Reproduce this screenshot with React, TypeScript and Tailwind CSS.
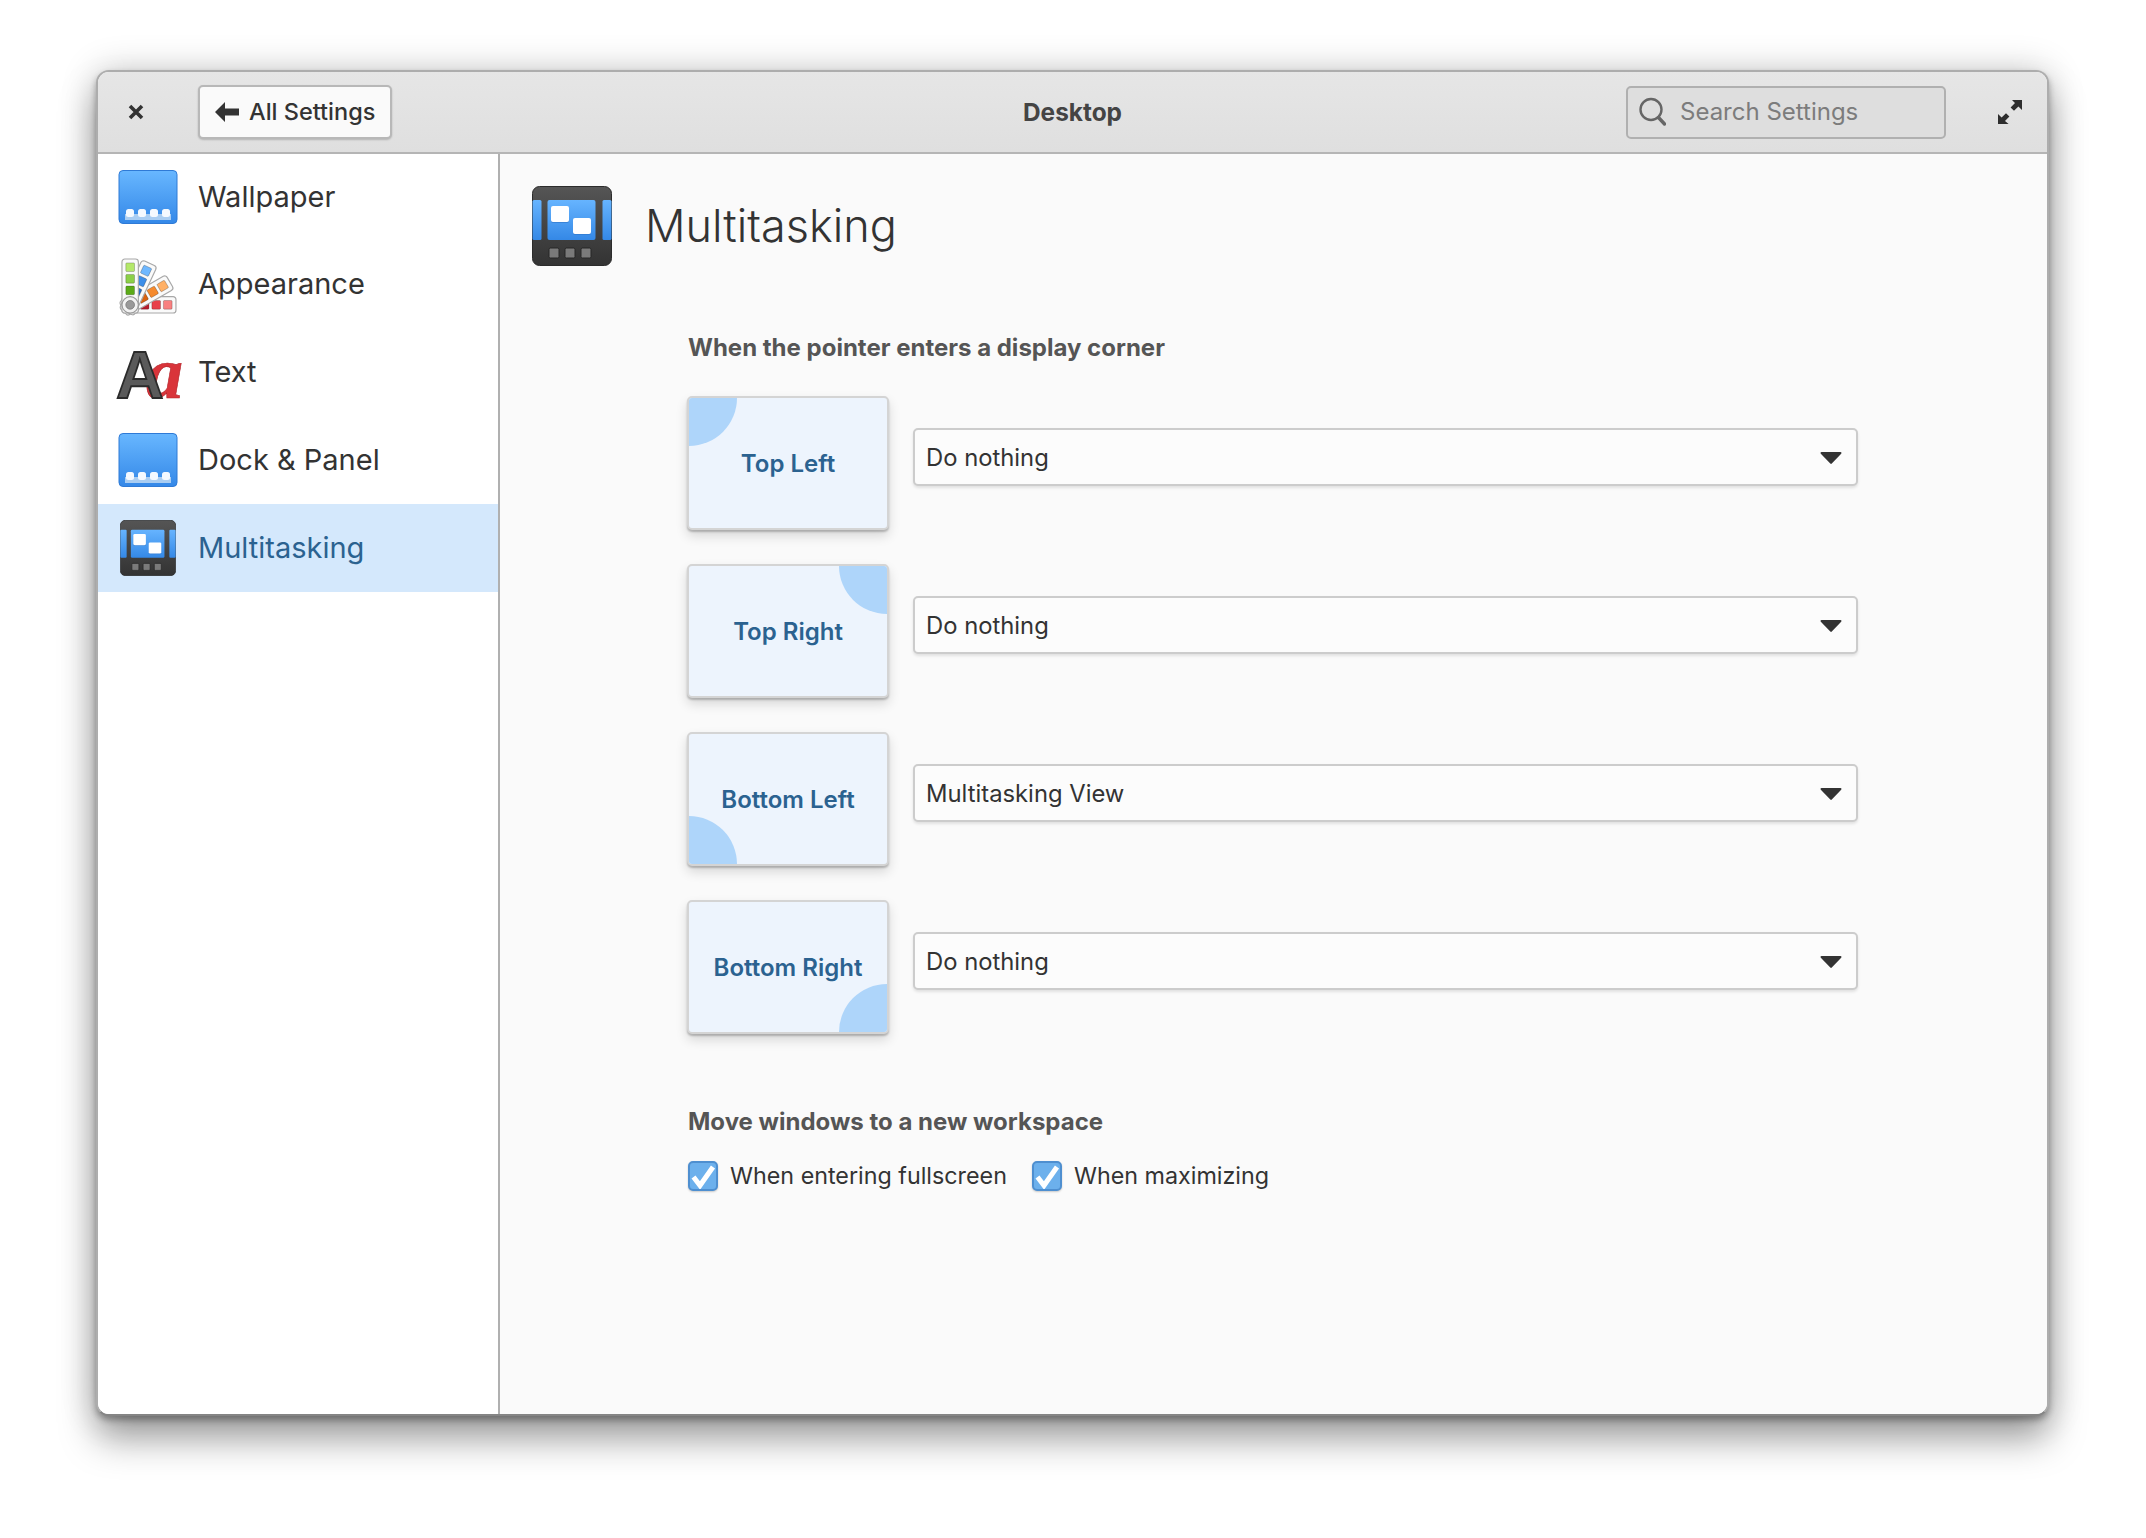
import React from "react";

function DockIcon({ id }: { id: string }) {
  return (
    <svg width="60" height="56" viewBox="0 0 60 56">
      <defs>
        <linearGradient id={id} x1="0" y1="0" x2="0" y2="1">
          <stop offset="0" stopColor="#68b7ff" />
          <stop offset="1" stopColor="#3488e8" />
        </linearGradient>
      </defs>
      <rect x="1" y="1.5" width="58" height="53" rx="4" fill={`url(#${id})`} stroke="#2f7ad6" strokeWidth="1" />
      <rect x="7" y="45" width="46" height="6" fill="#a9cdf2" />
      {[8, 20, 32, 44].map((x) => (
        <rect key={x} x={x} y="40" width="8" height="8" rx="2.5" fill="#f4f9ff" />
      ))}
    </svg>
  );
}

function MultiIcon({ size, id }: { size: number; id: string }) {
  return (
    <svg width={size} height={size} viewBox="0 0 80 80">
      <defs>
        <linearGradient id={id} x1="0" y1="0" x2="0" y2="1">
          <stop offset="0" stopColor="#66b4ff" />
          <stop offset="1" stopColor="#3488e6" />
        </linearGradient>
        <linearGradient id={id + "d"} x1="0" y1="0" x2="0" y2="1">
          <stop offset="0" stopColor="#555" />
          <stop offset="1" stopColor="#333" />
        </linearGradient>
      </defs>
      <rect x="0.5" y="0.5" width="79" height="79" rx="7" fill={`url(#${id}d)`} stroke="#2b2b2b" />
      <rect x="0.5" y="14" width="9" height="40" rx="1.5" fill={`url(#${id})`} />
      <rect x="70.5" y="14" width="9" height="40" rx="1.5" fill={`url(#${id})`} />
      <rect x="15.5" y="14" width="48" height="40" rx="2" fill={`url(#${id})`} />
      <rect x="19" y="21" width="18" height="16" rx="2" fill="#2f74c8" opacity="0.6" />
      <rect x="41" y="33" width="18" height="16" rx="2" fill="#2f74c8" opacity="0.6" />
      <rect x="19" y="20" width="18" height="16" rx="2" fill="#fff" />
      <rect x="41" y="32" width="18" height="16" rx="2" fill="#fff" />
      {[17, 33, 49].map((x) => (
        <rect key={x} x={x} y="62" width="10" height="10" rx="1.5" fill="#7a7a7a" stroke="#262626" strokeWidth="1" />
      ))}
    </svg>
  );
}

function Strip({ angle, colors }: { angle: number; colors: string[] }) {
  return (
    <g transform={`rotate(${angle} 9.5 46.5)`}>
      <rect x="1" y="-1" width="17" height="56" rx="3" fill="#fafafa" stroke="#a8a8a8" strokeWidth="1.2" />
      {colors.map((c, i) => (
        <rect key={i} x="5" y={3 + i * 12} width="9" height="9" rx="1" fill={c} stroke="rgba(0,0,0,0.28)" strokeWidth="0.8" />
      ))}
    </g>
  );
}

function AppearanceIcon() {
  return (
    <svg width="54" height="54" viewBox="0 0 56 56" className="mt-[5px] overflow-visible">
      <Strip angle={90} colors={["#f98080", "#e8404a", "#b81c2c"]} />
      <Strip angle={60} colors={["#ffb066", "#f58a2e", "#d96210"]} />
      <Strip angle={25} colors={["#6fb8ff", "#3d8ee8", "#2a6fc8"]} />
      <Strip angle={0} colors={["#b4e86a", "#8cd048", "#5cab18"]} />
      <circle cx="9.5" cy="46.5" r="8.5" fill="#f2f2f2" stroke="#999" strokeWidth="1.2" />
      <circle cx="9.5" cy="46.5" r="4.5" fill="#999" stroke="#777" strokeWidth="0.8" />
    </svg>
  );
}

function TextIcon() {
  return (
    <svg width="66" height="54" viewBox="0 0 66 54" className="overflow-visible">
      <text x="31" y="53" fontFamily="'Liberation Serif',serif" fontStyle="italic" fontWeight="700" fontSize="74" fill="#d9343a" stroke="#b3262c" strokeWidth="0.6">a</text>
      <text x="1" y="53" fontFamily="'Liberation Sans',sans-serif" fontWeight="700" fontSize="66" fill="#5a5a5a" stroke="#2b2b2b" strokeWidth="1.8">A</text>
    </svg>
  );
}

function SideRow({ icon, label, active, first }: { icon: React.ReactNode; label: string; active?: boolean; first?: boolean }) {
  return (
    <div className={`flex items-center pl-[20px] ${first ? "h-[86px]" : "h-[88px]"} ${active ? "bg-[#d4e8fc] text-[#2b6290]" : "text-[#333333]"}`}>
      <div className="flex w-[60px] justify-center">{icon}</div>
      <span className="mb-[2px] ml-[20px] text-[29px] leading-none">{label}</span>
    </div>
  );
}

function Corner({ label, pos, value }: { label: string; pos: string; value: string }) {
  return (
    <div className="flex items-center">
      <div className="relative flex h-[134px] w-[202px] shrink-0 items-center justify-center overflow-hidden rounded-[5px] border-2 border-[#d4d4d4] bg-[#edf4fd] shadow-[0_2px_2px_rgba(0,0,0,0.22),0_6px_12px_rgba(0,0,0,0.14)]">
        <div className={`absolute h-[96px] w-[96px] rounded-full bg-[#aed5fa] ${pos}`} />
        <span className="relative pt-[2px] text-[24px] font-semibold text-[#2b6290]">{label}</span>
      </div>
      <div className="mb-[12px] ml-[24px] flex h-[58px] w-[945px] items-center justify-between rounded-[5px] border-2 border-[#cccccc] bg-[#fcfcfc] pl-[11px] pr-[14px] shadow-[0_2px_3px_rgba(0,0,0,0.1)]">
        <span className="pt-[2px] text-[23.8px] text-[#333333]">{value}</span>
        <svg className="mt-[2px]" width="22" height="14" viewBox="0 0 22 14"><path d="M1.5 1h19a1 1 0 0 1 .7 1.7L11.8 12.6a1 1 0 0 1-1.5 0L.8 2.7A1 1 0 0 1 1.5 1Z" fill="#333" /></svg>
      </div>
    </div>
  );
}

function Check({ label }: { label: string }) {
  return (
    <div className="flex items-center">
      <div className="flex h-[30px] w-[30px] items-center justify-center rounded-[5px] border-2 border-[#4e8fd0] bg-[#6cb0ec] shadow-[0_1px_2px_rgba(0,0,0,0.2)]">
        <svg width="26" height="26" viewBox="0 0 26 26"><path d="M3.5 14 10 22.5 23 4" fill="none" stroke="#fff" strokeWidth="5" /></svg>
      </div>
      <span className="ml-[12px] text-[23.3px] leading-none text-[#333333]">{label}</span>
    </div>
  );
}

export default function App() {
  return (
    <div className="h-[1538px] w-[2146px] overflow-hidden bg-white pl-[96px] pt-[70px] [font-family:Inter,sans-serif]">
      <div className="flex h-[1346px] w-[1953px] flex-col overflow-hidden rounded-[13px] border-2 border-[#adadad] border-b-[#858585] bg-white shadow-[0_4px_6px_rgba(0,0,0,0.3),0_24px_36px_rgba(0,0,0,0.34),0_0_36px_rgba(0,0,0,0.2)]">
        <header className="grid h-[82px] shrink-0 grid-cols-[1fr_auto_1fr] items-center border-b-2 border-[#b5b5b5] bg-gradient-to-b from-[#e6e6e6] to-[#dfdfdf]">
          <div className="flex items-center">
            <svg className="ml-[30px]" width="16" height="16" viewBox="0 0 16 16"><path d="M2 2l12 12M14 2 2 14" stroke="#333" strokeWidth="3.6" /></svg>
            <div className="ml-[54px] flex h-[54px] w-[194px] items-center rounded-[5px] border-2 border-[#b8b8b8] bg-[#fafafa] pl-[14px] shadow-[0_1px_2px_rgba(0,0,0,0.2)]">
              <svg width="26" height="22" viewBox="0 0 26 22"><path d="M1 11 11 1V7.5H25V14.5H11V21Z" fill="#333" /></svg>
              <span className="ml-[9px] text-[23.5px] font-medium leading-none text-[#333333]">All Settings</span>
            </div>
          </div>
          <span className="text-[24.4px] font-bold text-[#444444]">Desktop</span>
          <div className="flex items-center justify-end">
            <div className="flex h-[53px] w-[320px] items-center rounded-[5px] border-2 border-[#b0b0b0] bg-[#dedede] pl-[10px]">
              <svg width="28" height="30" viewBox="0 0 28 30"><circle cx="13" cy="12.5" r="10.5" fill="none" stroke="#666" strokeWidth="2.4" /><path d="M20.5 20.5 26.5 27" stroke="#666" strokeWidth="3.4" strokeLinecap="round" /></svg>
              <span className="ml-[14px] text-[24px] leading-none text-[#7c7c7c]">Search Settings</span>
            </div>
            <svg className="ml-[51px] mr-[24px]" width="26" height="26" viewBox="0 0 26 26"><path d="M15 1h10v10l-3.6-3.6-4.4 4.4-3.4-3.4 4.4-4.4ZM1 25V15l3.6 3.6L9 14.2l3.4 3.4L8 22l3.6 3Z" fill="#2e2e2e" /></svg>
          </div>
        </header>
        <div className="flex min-h-0 flex-1">
          <aside className="w-[402px] shrink-0 border-r-2 border-[#b0b0b0] bg-white">
            <SideRow first icon={<DockIcon id="d1" />} label="Wallpaper" />
            <SideRow icon={<AppearanceIcon />} label="Appearance" />
            <SideRow icon={<TextIcon />} label="Text" />
            <SideRow icon={<DockIcon id="d2" />} label="Dock & Panel" />
            <SideRow active icon={<MultiIcon size={56} id="m1" />} label="Multitasking" />
          </aside>
          <main className="min-w-0 flex-1 bg-[#fafafa]">
            <div className="flex items-center pl-[32px] pt-[32px]">
              <MultiIcon size={80} id="m2" />
              <h1 className="mb-[2px] ml-[33px] text-[45px] font-light leading-none text-[#333333]">Multitasking</h1>
            </div>
            <div className="pl-[187px] pt-[70px]">
              <h2 className="pl-[1px] text-[24px] font-bold leading-none text-[#555555]">When the pointer enters a display corner</h2>
              <div className="mt-[36px] flex flex-col gap-[34px]">
                <Corner label="Top Left" pos="-left-[48px] -top-[48px]" value="Do nothing" />
                <Corner label="Top Right" pos="-right-[48px] -top-[48px]" value="Do nothing" />
                <Corner label="Bottom Left" pos="-bottom-[48px] -left-[48px]" value="Multitasking View" />
                <Corner label="Bottom Right" pos="-bottom-[48px] -right-[48px]" value="Do nothing" />
              </div>
              <h2 className="mt-[76px] pl-[1px] text-[24px] font-bold leading-none text-[#555555]">Move windows to a new workspace</h2>
              <div className="mt-[27px] flex gap-[25px] pl-[1px]">
                <Check label="When entering fullscreen" />
                <Check label="When maximizing" />
              </div>
            </div>
          </main>
        </div>
      </div>
    </div>
  );
}
